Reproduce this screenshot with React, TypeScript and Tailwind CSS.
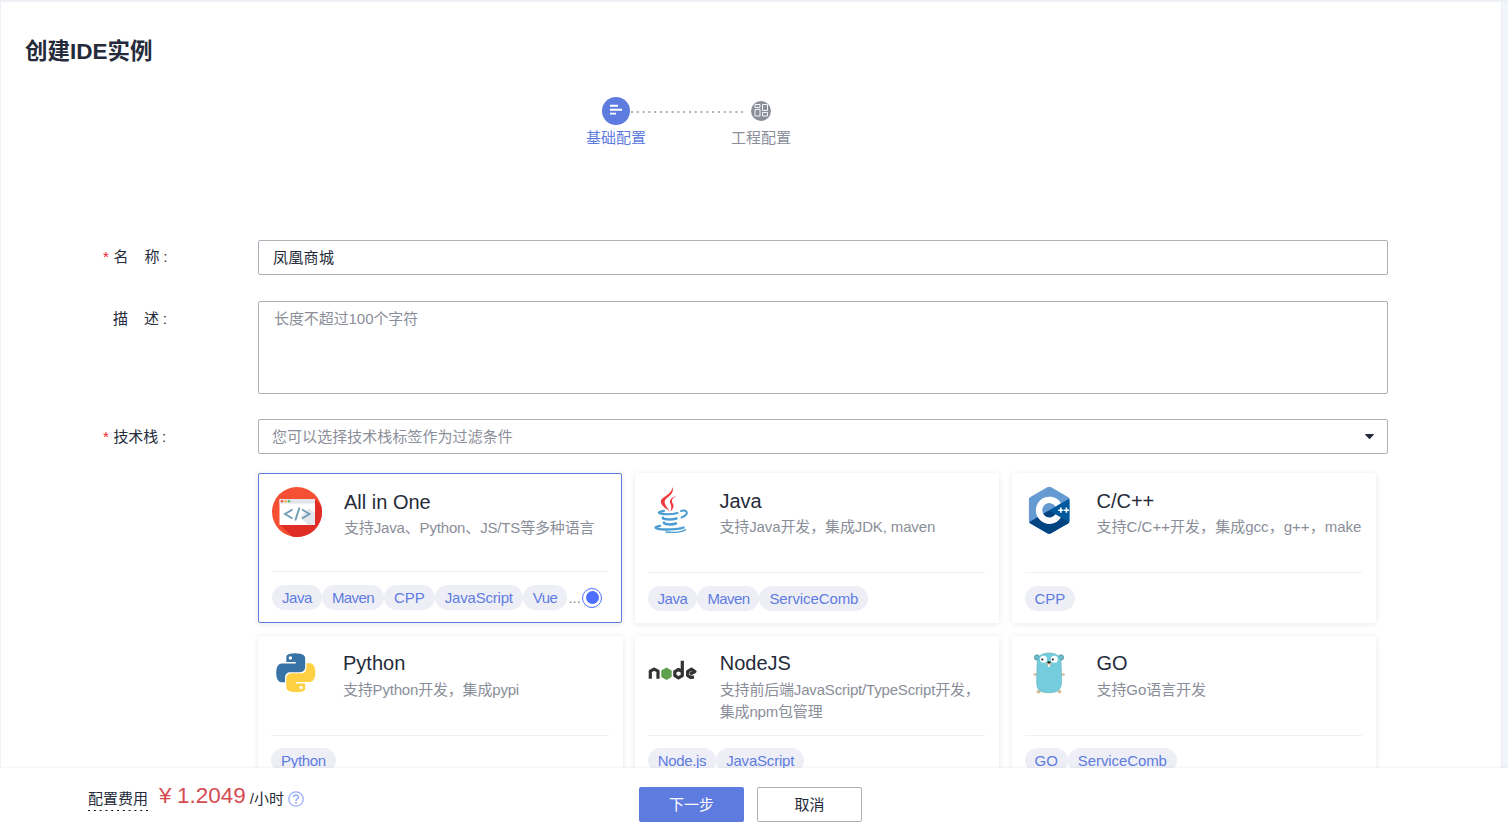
import type { ReactNode } from "react";

const PYTHON_BLUE =
  "M14.25.18l.9.2.73.26.59.3.45.32.34.34.25.34.16.33.1.3.04.26.02.2-.01.13V8.5l-.05.63-.13.55-.21.46-.26.38-.3.31-.33.25-.35.19-.35.14-.33.1-.3.07-.26.04-.21.02H8.77l-.69.05-.59.14-.5.22-.41.27-.33.32-.27.35-.2.36-.15.37-.1.35-.07.32-.04.27-.02.21v3.06H3.17l-.21-.03-.28-.07-.32-.12-.35-.18-.36-.26-.36-.36-.35-.46-.32-.59-.28-.73-.21-.88-.14-1.05-.05-1.23.06-1.22.16-1.04.24-.87.32-.71.36-.57.4-.44.42-.33.42-.24.4-.16.36-.1.32-.05.24-.01h.16l.06.01h8.16v-.83H6.18l-.01-2.75-.02-.37.05-.34.11-.31.17-.28.25-.26.31-.23.38-.2.44-.18.51-.15.58-.12.64-.1.71-.06.77-.04.84-.02 1.27.05zm-6.3 1.98l-.23.33-.08.41.08.41.23.34.33.22.41.09.41-.09.33-.22.23-.34.08-.41-.08-.41-.23-.33-.33-.22-.41-.09-.41.09z";
const PYTHON_YELLOW =
  "M21.04 6.11l.28.06.32.12.35.18.36.27.36.35.35.47.32.59.28.73.21.88.14 1.04.05 1.23-.06 1.23-.16 1.04-.24.86-.32.71-.36.57-.4.45-.42.33-.42.24-.4.16-.36.09-.32.05-.24.02-.16-.01h-8.22v.82h5.84l.01 2.76.02.36-.05.34-.11.31-.17.29-.25.25-.31.24-.38.2-.44.17-.51.15-.58.13-.64.09-.71.07-.77.04-.84.01-1.27-.04-1.07-.14-.9-.2-.73-.25-.59-.3-.45-.33-.34-.34-.25-.34-.16-.33-.1-.3-.04-.25-.02-.2.01-.13v-5.34l.05-.64.13-.54.21-.46.26-.38.3-.32.33-.24.35-.2.35-.14.33-.1.3-.06.26-.04.21-.02.13-.01h5.84l.69-.05.59-.14.5-.21.41-.28.33-.32.27-.35.2-.36.15-.36.1-.35.07-.32.04-.28.02-.21V6.07h2.09l.14.01zm-6.47 14.25l-.23.33-.08.41.08.41.23.33.33.23.41.08.41-.08.33-.23.23-.33.08-.41-.08-.41-.23-.33-.33-.23-.41-.08-.41.08z";

function AllInOneLogo() {
  return (
    <svg width="50" height="50" viewBox="0 0 50 50">
      <defs>
        <clipPath id="disc">
          <circle cx="25" cy="25" r="25" />
        </clipPath>
      </defs>
      <g clipPath="url(#disc)">
        <rect width="50" height="50" fill="#f55033" />
        <path d="M43 12L60 29V60H31L8 38z" fill="#e02d26" />
      </g>
      <rect x="7.5" y="12" width="35.5" height="26" rx="1" fill="#fff" />
      <path d="M28 30L36 38H42a1 1 0 0 0 1-1V26L37 21z" fill="#e6e7ec" />
      <path d="M8.500 12H42a1 1 0 0 1 1 1V16.500H7.500V13a1 1 0 0 1 1-1z" fill="#e3e4ea" />
      <circle cx="10" cy="14.300" r="1.200" fill="#f0503c" />
      <circle cx="13.500" cy="14.300" r="1.200" fill="#f2b43c" />
      <circle cx="17" cy="14.300" r="1.200" fill="#5cb85c" />
      <g fill="none" stroke="#6f9db4" strokeWidth="1.900">
        <path d="M20.500 22.500L13 27L20.500 31.500" />
        <path d="M30 22.500L37.500 27L30 31.500" />
        <path d="M27.500 20.500L23.300 33.500" />
      </g>
    </svg>
  );
}

function JavaLogo() {
  return (
    <svg width="50" height="50" viewBox="-4 0 50 50">
      <g fill="#ee3b40">
        <path d="M24.200 1C26.500 6 22.500 9.500 18.500 12.500C14.500 16 17.500 19 21.800 25.500C18 22 11.800 19 13 14.500C14.200 10.500 24.500 8.500 24.200 1z" transform="translate(-4 0)" />
        <path d="M29 9.500C25 11 21.500 13 22 16.500C22.300 18.700 24.500 20 22.300 25.500C26.500 22 25.800 19 24.500 17C22.500 13.500 25.500 11.500 29 9.500z" transform="translate(-4 0)" />
      </g>
      <g fill="none" stroke="#4c9ed2" strokeLinecap="round">
        <path d="M12 24.800C7 25.500 5 26.900 9 27.700C14.500 28.600 21 28.200 25.500 27" strokeWidth="2.200" />
        <path d="M29 25C34 23.500 36.500 26.500 33.500 29.300C32.400 30.400 31 31 29.500 31.500" strokeWidth="2" />
        <path d="M11 31.700C9.500 33.200 18 34.200 24.500 32.500" strokeWidth="2.500" />
        <path d="M12 36.500C11 38.200 19 39.200 24 37.500" strokeWidth="2.500" />
        <path d="M8 39.800C1.500 40.800 2 42.800 10 43.300C18 43.900 29 43 31.500 41.500" strokeWidth="2.300" />
        <path d="M14 46C21 47 31.500 46 33.500 43.500" strokeWidth="1.300" />
      </g>
    </svg>
  );
}

function CppLogo() {
  return (
    <svg width="50" height="50" viewBox="-.700 0 50 50">
      <defs>
        <clipPath id="hexagon">
          <path d="M21.500 1.300Q23.500 .2 25.500 1.300L42.300 11Q44 12 44 14V34.500Q44 36.500 42.300 37.500L25.500 47.200Q23.500 48.300 21.500 47.200L4.700 37.500Q3 36.500 3 34.500V14Q3 12 4.700 11z" />
        </clipPath>
      </defs>
      <g clipPath="url(#hexagon)">
        <rect width="50" height="50" fill="#659ad2" />
        <path d="M23.500 24.300L50 9V50z" fill="#00599c" />
        <path d="M23.500 24.300L44 36.500V50H3V36.500z" fill="#004482" />
      </g>
      <path d="M32.500 18.700A10.400 10.400 0 1 0 32.500 29.900" fill="none" stroke="#fff" strokeWidth="6.400" />
      <g fill="#fff">
        <path d="M34.300 21.600h1.600v1.800h1.800v1.600h-1.800v1.800h-1.600V25h-1.800v-1.600h1.800z" />
        <path d="M39.900 21.600h1.600v1.800h1.800v1.600h-1.800v1.800h-1.600V25h-1.800v-1.600h1.800z" />
      </g>
    </svg>
  );
}

function PythonLogo() {
  return (
    <svg width="50" height="50" viewBox="0 0 50 50">
      <g transform="translate(5.300 4.300) scale(1.620)">
        <path d={PYTHON_BLUE} fill="#3873a5" />
        <path d={PYTHON_YELLOW} fill="#ffd043" />
      </g>
    </svg>
  );
}

function NodeLogo() {
  return (
    <svg width="50" height="50" viewBox="0 .800 50 50">
      <g fill="none" stroke="#333" strokeWidth="3.200" strokeLinejoin="round">
        <path d="M2.300 30.500V23L6.100 21L10 23V30.500" />
        <path d="M34.300 12.500V27.500L30.500 29.700L26.800 27.500V23.500L30.500 21.300L34.300 23.500" />
        <path d="M46 29L42.500 29.200L39.600 27.300V23.300L43.400 21L47 23.300L42 26" />
      </g>
      <path d="M18.500 19.200L23.700 22.300V28.700L18.500 31.700L13.300 28.700V22.300z" fill="#5fa04e" />
    </svg>
  );
}

function GopherLogo() {
  return (
    <svg width="50" height="50" viewBox="0 0 50 50">
      <g fill="#d4bd9c">
        <ellipse cx="10.300" cy="25.500" rx="2" ry="1.200" />
        <ellipse cx="38" cy="25.500" rx="2" ry="1.200" />
        <ellipse cx="13.500" cy="42.800" rx="2" ry="1.800" />
        <ellipse cx="34.500" cy="42.800" rx="2" ry="1.800" />
      </g>
      <circle cx="12" cy="8.500" r="2.700" fill="#69bdcc" stroke="#3f7e89" strokeWidth=".6" />
      <circle cx="36" cy="8.500" r="2.700" fill="#69bdcc" stroke="#3f7e89" strokeWidth=".6" />
      <path
        d="M24 4C32 4 35.500 7.500 36 13C36.300 19 36.500 25 36.500 33C36.500 40 33 43.700 24.500 43.700C16 43.700 12 41.500 11.800 35C11.500 27 12 20 12.300 13C12.600 7.500 16 4 24 4z"
        fill="#74cddd"
        stroke="#5ba7b4"
        strokeWidth=".6"
      />
      <circle cx="18.500" cy="10.300" r="3.500" fill="#fff" />
      <circle cx="29.300" cy="10.300" r="3.500" fill="#fff" />
      <circle cx="17.300" cy="10.500" r="1.100" fill="#222" />
      <circle cx="27.800" cy="10.500" r="1.100" fill="#222" />
      <ellipse cx="24" cy="14.800" rx="2.700" ry="1.600" fill="#d8c09a" />
      <rect x="23.200" y="15.500" width="1.700" height="2.500" fill="#fff" />
      <ellipse cx="24" cy="13.400" rx="1.700" ry="1.100" fill="#222" />
    </svg>
  );
}

type Stack = { title: string; desc: string; descClass: string; tags: string[]; logo: ReactNode; selected?: boolean };

const tagTracking: Record<string, string> = {
  Java: "tracking-[-0.45px]",
  Maven: "tracking-[-0.6px]",
  JavaScript: "tracking-[-0.2px]",
  Vue: "tracking-[-0.5px]",
  ServiceComb: "tracking-[-0.1px]",
  Python: "tracking-[-0.3px]",
  "Node.js": "tracking-[-0.35px]",
};

const firstRow: Stack[] = [
  {
    title: "All in One",
    desc: "支持Java、Python、JS/TS等多种语言",
    descClass: "tracking-[-0.16px]",
    tags: ["Java", "Maven", "CPP", "JavaScript", "Vue"],
    logo: <AllInOneLogo />,
    selected: true,
  },
  {
    title: "Java",
    desc: "支持Java开发，集成JDK, maven",
    descClass: "tracking-[-0.13px]",
    tags: ["Java", "Maven", "ServiceComb"],
    logo: <JavaLogo />,
  },
  {
    title: "C/C++",
    desc: "支持C/C++开发，集成gcc，g++，make",
    descClass: "tracking-[0.03px]",
    tags: ["CPP"],
    logo: <CppLogo />,
  },
];

const secondRow: Stack[] = [
  {
    title: "Python",
    desc: "支持Python开发，集成pypi",
    descClass: "tracking-[-0.19px]",
    tags: ["Python"],
    logo: <PythonLogo />,
  },
  {
    title: "NodeJS",
    desc: "支持前后端JavaScript/TypeScript开发，集成npm包管理",
    descClass: "tracking-[-0.18px]",
    tags: ["Node.js", "JavaScript"],
    logo: <NodeLogo />,
  },
  {
    title: "GO",
    desc: "支持Go语言开发",
    descClass: "tracking-[-0.08px]",
    tags: ["GO", "ServiceComb"],
    logo: <GopherLogo />,
  },
];

function StackCard({ stack, titleClass, tagsClass }: { stack: Stack; titleClass: string; tagsClass: string }) {
  return (
    <div
      className={
        stack.selected
          ? "h-[150px] w-[364px] shrink-0 rounded-[2px] border border-[#5e7ce0] px-[13px] pt-[13px] shadow-[0_1px_6px_rgba(0,0,0,0.09)]"
          : "h-[150px] w-[364.5px] shrink-0 rounded-[2px] pr-[14px] pl-[13px] pt-[13px] shadow-[0_1px_6px_rgba(0,0,0,0.09)]"
      }
    >
      <div className={stack.selected ? "flex h-[85px] border-b border-[#f0f1f8]" : "flex h-[87px] border-b border-[#f0f1f8]"}>
        <div className="h-[50px] w-[50px] shrink-0">{stack.logo}</div>
        <div className="ml-[22px] w-[266px] shrink-0">
          <div className={`text-[20px] text-[#252b3a] ${titleClass}`}>{stack.title}</div>
          <div className={`w-[268px] text-[15px] leading-[22px] text-[#8a8e99] ${stack.descClass}`}>{stack.desc}</div>
        </div>
      </div>
      <div className={`flex items-center ${tagsClass}`}>
        {stack.tags.map((tag) => (
          <span
            key={tag}
            className={`h-[25px] rounded-full bg-[#eeeff6] px-[10px] text-[15px] leading-[25px] text-[#5e7ce0] ${tagTracking[tag] ?? ""}`}
          >
            {tag}
          </span>
        ))}
        {stack.selected && (
          <>
            <span className="ml-[1px] w-[14px] text-[15px] leading-[25px] text-[#8a8e99]">...</span>
            <span className="flex h-5 w-5 items-center justify-center rounded-full border border-[#4d6fff]">
              <span className="h-[13px] w-[13px] rounded-full bg-[#4d6fff]" />
            </span>
          </>
        )}
      </div>
    </div>
  );
}

function Label({ children, required }: { children: ReactNode; required?: boolean }) {
  return (
    <div className="flex w-[155px] shrink-0 leading-[24px] text-[#252b3a]">
      <span className={required ? "w-[10.5px] shrink-0 text-[#f5222d]" : "w-[10px] shrink-0"}>{required ? "*" : ""}</span>
      <span className="tracking-[-0.15px] whitespace-pre">{children}</span>
    </div>
  );
}

export default function App() {
  return (
    <div className="flex h-[828px] w-[1508px] flex-col overflow-hidden bg-[#edf1f5] font-['Liberation_Sans','Noto_Sans_CJK_SC',sans-serif] text-[15px]">
      <div className="flex h-[768px] shrink-0 pt-[2px] pl-px">
        <main className="w-[1500px] shrink-0 overflow-hidden bg-white">
          <h1 className="ml-6 pt-[34px] text-[22.5px] leading-[32px] font-bold text-[#252b3a]">创建IDE实例</h1>

          <div className="mt-[29px] ml-[585px] flex h-[55px]">
            <div className="flex w-[60px] flex-col items-center">
              <div className="flex h-7 w-7 items-center justify-center rounded-full bg-[#5e7ce0]">
                <svg width="28" height="28" viewBox="0 0 28 28" fill="#fff">
                  <path d="M8 7.800h8v1.900H8zM8 11.800h12v1.900H8zM8 15.700h6v1.900H8z" />
                </svg>
              </div>
              <span className="mt-[2px] leading-[22px] text-[#5e7ce0]">基础配置</span>
            </div>
            <svg className="-ml-[15px]" width="116" height="28" viewBox="0 0 116 28">
              <line x1="0" y1="15" x2="114" y2="15" stroke="#adb0b8" strokeWidth="2" strokeDasharray="2 3.800" />
            </svg>
            <div className="-ml-4 flex w-[60px] flex-col items-center">
              <div className="flex h-7 items-center justify-center">
                <svg width="20" height="20" viewBox="0 0 20 20">
                  <circle cx="10" cy="10" r="10" fill="#8a8e99" />
                  <path
                    d="M4 3.500h5v3h-5zM4 8.500h5v6.500h-5zM11.500 3.500h5v6h-5zM11.500 11.500h5v3.500h-5z"
                    fill="none"
                    stroke="#f4f4f6"
                  />
                </svg>
              </div>
              <span className="mt-[2px] leading-[22px] text-[#8a8e99]">工程配置</span>
            </div>
          </div>

          <div className="mt-[88px] ml-[102px] flex">
            <div className="pt-[5px]">
              <Label required>{"名    称 :"}</Label>
            </div>
            <div className="h-[35px] w-[1130px] rounded-[2px] border border-[#adb0b8] px-[14px] leading-[34px] tracking-[0.3px] text-[#252b3a]">
              凤凰商城
            </div>
          </div>
          <div className="mt-[26px] ml-[102px] flex">
            <div className="pt-[6px]">
              <Label>{"描    述 :"}</Label>
            </div>
            <div className="h-[93px] w-[1130px] rounded-[2px] border border-[#adb0b8] px-[15px] pt-[5px] leading-[24px] tracking-[-0.08px] text-[#8a8e99]">
              长度不超过100个字符
            </div>
          </div>
          <div className="mt-[25px] ml-[102px] flex">
            <div className="pt-[6px]">
              <Label required>技术栈 :</Label>
            </div>
            <div className="flex h-[35px] w-[1130px] items-center justify-between rounded-[2px] border border-[#adb0b8] pr-[13px] pl-[13px] leading-[33px] tracking-[0.05px] text-[#8a8e99]">
              <span>您可以选择技术栈标签作为过滤条件</span>
              <svg width="9" height="5" viewBox="0 0 9 5">
                <path d="M.6 0H8.400Q9.200 .2 8.600 1L5 4.700Q4.500 5.100 4 4.700L.4 1Q-.2 .2 .6 0z" fill="#252b3a" />
              </svg>
            </div>
          </div>

          <div className="mt-[19px] ml-[257px] flex flex-col gap-[13px]">
            <div className="flex gap-[12.5px]">
              {firstRow.map((s) => (
                <StackCard key={s.title} stack={s} titleClass="h-[30px] leading-[31px]" tagsClass="mt-[13px]" />
              ))}
            </div>
            <div className="flex gap-[12.25px]">
              {secondRow.map((s) => (
                <StackCard key={s.title} stack={s} titleClass="h-[30px] leading-[29px]" tagsClass="mt-[12px]" />
              ))}
            </div>
          </div>
        </main>
        <div className="flex-1 border-l border-[#e9edf1] bg-[#f3f6f9]" />
      </div>

      <footer className="relative flex h-[60px] shrink-0 bg-white shadow-[0_0_3px_rgba(0,0,0,0.08)]">
        <div className="flex w-[551px] pl-[88px] text-[#252b3a]">
          <div className="mt-[20px] w-[60px] leading-[22px]">
            配置费用
            <svg className="block" width="60" height="1" viewBox="0 0 60 1">
              <line x1="0" y1=".5" x2="60" y2=".5" stroke="#111" strokeWidth="1" strokeDasharray="2 3.800" />
            </svg>
          </div>
          <span className="mt-[12px] ml-[11px] w-[18px] text-[22.5px] leading-[32px] text-[#d64a52]">¥</span>
          <span className="mt-[12px] text-[22.5px] leading-[32px] text-[#d64a52]">1.2049</span>
          <span className="mt-[20px] ml-[4px] leading-[22px]">/小时</span>
          <svg className="mt-[22.5px] ml-[4px]" width="16" height="16" viewBox="0 0 16 16" fill="none" stroke="#96adfa">
            <circle cx="8" cy="8" r="7.200" strokeWidth="1.300" />
            <path d="M5.500 6.300C5.500 3.200 10.500 3.200 10.500 6.200C10.500 8 8 8 8 10" strokeWidth="1.600" />
            <path d="M8 11V12.700" strokeWidth="1.700" />
          </svg>
        </div>
        <div className="ml-[88px] flex gap-[13px] pt-[19px]">
          <button className="h-[35px] w-[105px] rounded-[2px] bg-[#5e7ce0] pt-px text-white">下一步</button>
          <button className="h-[35px] w-[105px] rounded-[2px] border border-[#adb0b8] bg-white pt-px text-[#252b3a]">取消</button>
        </div>
      </footer>
    </div>
  );
}
